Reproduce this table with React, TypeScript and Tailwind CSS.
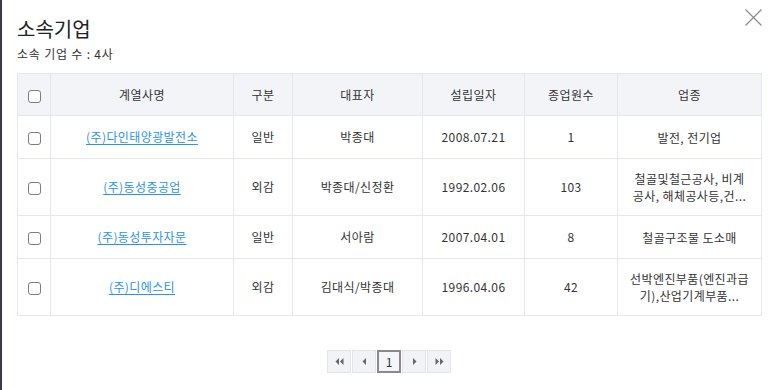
import { ReactNode } from "react";

type Row = {
  name: string;
  kind: string;
  ceo: string;
  founded: string;
  staff: string;
  industry: ReactNode;
  tall?: boolean;
};

const rows: Row[] = [
  { name: "(주)다인태양광발전소", kind: "일반", ceo: "박종대", founded: "2008.07.21", staff: "1", industry: "발전, 전기업" },
  {
    name: "(주)동성중공업",
    kind: "외감",
    ceo: "박종대/신정환",
    founded: "1992.02.06",
    staff: "103",
    industry: (
      <>
        철골및철근공사, 비계
        <br />
        공사, 해체공사등,건...
      </>
    ),
    tall: true,
  },
  { name: "(주)동성투자자문", kind: "일반", ceo: "서아람", founded: "2007.04.01", staff: "8", industry: "철골구조물 도소매" },
  {
    name: "(주)디에스티",
    kind: "외감",
    ceo: "김대식/박종대",
    founded: "1996.04.06",
    staff: "42",
    industry: (
      <>
        선박엔진부품(엔진과급
        <br />
        기),산업기계부품...
      </>
    ),
    tall: true,
  },
];

function Checkbox() {
  return <span className="inline-block w-[13px] h-[13px] rounded-[3px] border border-[#7d7d7d] bg-white align-middle" />;
}

function PageButton({ children, active }: { children: ReactNode; active?: boolean }) {
  return (
    <button
      className={
        "w-[24px] h-[23px] flex items-center justify-center text-[12px] " +
        (active ? "border-2 border-[#8a8a8a] bg-[#f4f5f8] text-[#333]" : "border border-[#e2e4ec] bg-[#f2f3f7] text-[#666]")
      }
    >
      {children}
    </button>
  );
}

export default function App() {
  const th = "border border-[#e4e7ee] font-normal text-[12px] text-[#333] tracking-[0.5px]";
  const td = "border border-[#e4e7ee] text-[12px] text-[#333] text-center tracking-[0.4px]";

  return (
    <div
      className="w-[773px] h-[390px] bg-white flex overflow-hidden"
      style={{ fontFamily: '"Noto Sans CJK KR", "Noto Sans", sans-serif' }}
    >
      <div className="w-[2px] bg-[#3a3d44] shrink-0" />
      <div className="relative flex-1 pl-[15px] pt-[15px]">
        <button className="absolute right-[10px] top-[8px] text-[#8c8c8c]">
          <svg width="19" height="19" viewBox="0 0 19 19" fill="none" stroke="currentColor" strokeWidth="1.2">
            <path d="M1.5 1.5 L17.5 17.5 M17.5 1.5 L1.5 17.5" />
          </svg>
        </button>
        <h2 className="text-[20px] leading-[28px] text-[#222] font-normal">소속기업</h2>
        <p className="text-[12px] leading-[16px] mt-[3px] text-[#333] tracking-[0.8px]">소속 기업 수 : 4사</p>

        <table className="mt-[11px] w-[744px] border-collapse table-fixed">
          <colgroup>
            <col className="w-[33px]" />
            <col className="w-[183px]" />
            <col className="w-[59px]" />
            <col className="w-[130px]" />
            <col className="w-[102px]" />
            <col className="w-[93px]" />
            <col className="w-[144px]" />
          </colgroup>
          <thead>
            <tr className="h-[42px] bg-[#f3f4f8]">
              <th className={th}>
                <Checkbox />
              </th>
              <th className={th}>계열사명</th>
              <th className={th}>구분</th>
              <th className={th}>대표자</th>
              <th className={th}>설립일자</th>
              <th className={th}>종업원수</th>
              <th className={th}>업종</th>
            </tr>
          </thead>
          <tbody>
            {rows.map((r) => (
              <tr key={r.name} className={r.tall ? "h-[57px]" : "h-[43px]"}>
                <td className={td}>
                  <Checkbox />
                </td>
                <td className={td}>
                  <a className="text-[#2b94e6] underline underline-offset-2 cursor-pointer">{r.name}</a>
                </td>
                <td className={td}>{r.kind}</td>
                <td className={td}>{r.ceo}</td>
                <td className={td + " text-[11px]"}>{r.founded}</td>
                <td className={td + " text-[11px]"}>{r.staff}</td>
                <td className={td + " leading-[17px] tracking-[0.2px]"}>{r.industry}</td>
              </tr>
            ))}
          </tbody>
        </table>

        <div className="flex justify-center mt-[34px] gap-px pr-[12px]">
          <PageButton>
            <svg width="9" height="7" viewBox="0 0 9 7" fill="#666">
              <path d="M4 0 L0.5 3.5 L4 7 Z M8.5 0 L5 3.5 L8.5 7 Z" />
            </svg>
          </PageButton>
          <PageButton>
            <svg width="5" height="7" viewBox="0 0 5 7" fill="#666">
              <path d="M4 0 L0.5 3.5 L4 7 Z" />
            </svg>
          </PageButton>
          <PageButton active>1</PageButton>
          <PageButton>
            <svg width="5" height="7" viewBox="0 0 5 7" fill="#666">
              <path d="M1 0 L4.5 3.5 L1 7 Z" />
            </svg>
          </PageButton>
          <PageButton>
            <svg width="9" height="7" viewBox="0 0 9 7" fill="#666">
              <path d="M0.5 0 L4 3.5 L0.5 7 Z M5 0 L8.5 3.5 L5 7 Z" />
            </svg>
          </PageButton>
        </div>
      </div>
    </div>
  );
}
